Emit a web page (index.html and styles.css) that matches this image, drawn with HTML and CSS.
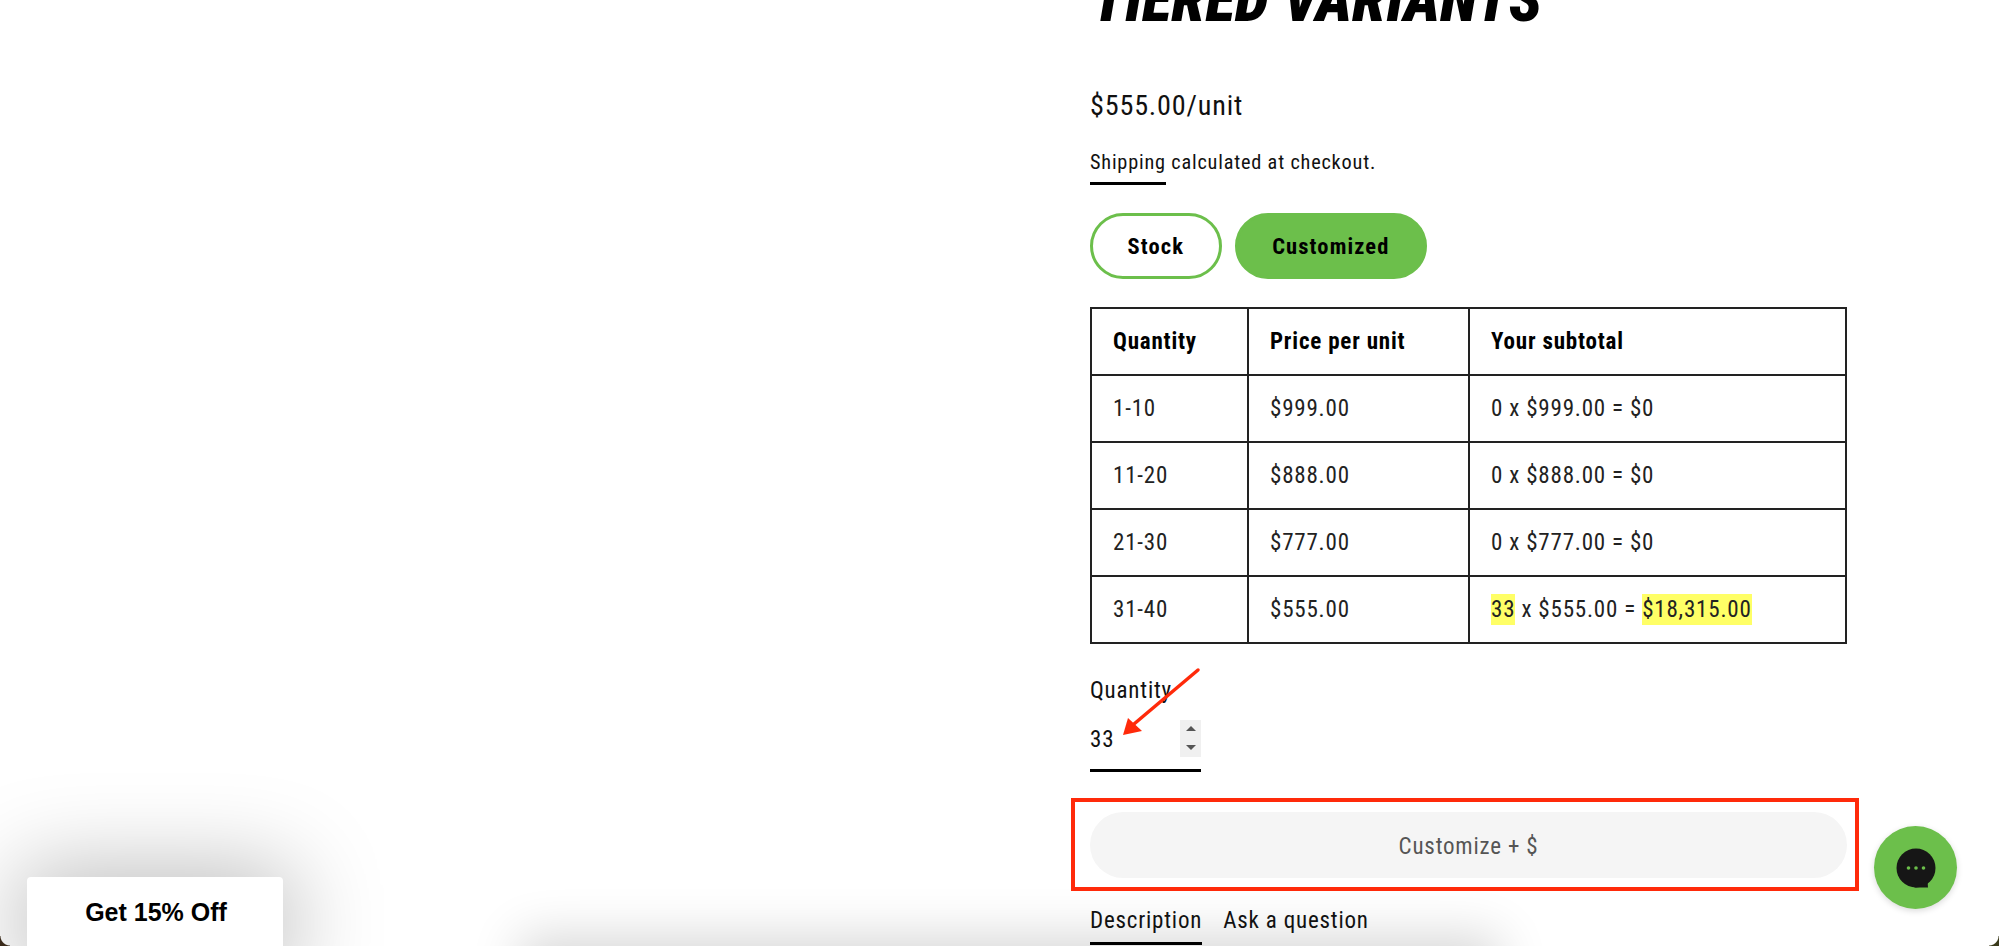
FILE: index.html
```html
<!DOCTYPE html>
<html lang="en">
<head>
<meta charset="utf-8">
<title>Tiered Variants</title>
<link rel="stylesheet" href="styles.css">
</head>
<body>
<div class="page">
  <div class="bottom-shade"></div>
  <main class="product">
    <h1 class="title">TIERED VARIANTS</h1>
    <p class="price">$555.00/unit</p>
    <p class="shipping"><a class="ship-link">Shipping</a> calculated at checkout.</p>
    <div class="options">
      <button class="opt">Stock</button>
      <button class="opt opt-on">Customized</button>
    </div>
    <table class="tiers">
      <colgroup><col class="c1"><col class="c2"><col class="c3"></colgroup>
      <tr><th>Quantity</th><th>Price per unit</th><th>Your subtotal</th></tr>
      <tr><td>1-10</td><td>$999.00</td><td>0 x $999.00 = $0</td></tr>
      <tr><td>11-20</td><td>$888.00</td><td>0 x $888.00 = $0</td></tr>
      <tr><td>21-30</td><td>$777.00</td><td>0 x $777.00 = $0</td></tr>
      <tr><td>31-40</td><td>$555.00</td><td><mark>33</mark> x $555.00 = <mark>$18,315.00</mark></td></tr>
    </table>
    <div class="qty">
      <div class="qty-label">Quantity</div>
      <div class="qty-field">
        <span>33</span>
        <span class="spin"><i class="up"></i><i class="down"></i></span>
      </div>
    </div>
    <div class="cta"><span class="cta-text">Customize + $</span></div>
    <nav class="tabs">
      <span class="tab tab-on">Description</span>
      <span class="tab">Ask a question</span>
    </nav>
  </main>

  <svg class="annot" width="1999" height="946" viewBox="0 0 1999 946">
    <rect x="1073" y="800" width="784" height="89" fill="none" stroke="#ff2a0a" stroke-width="4"/>
    <path d="M1198 670 L1134 724" stroke="#ff2a0a" stroke-width="3.500" fill="none" stroke-linecap="round"/>
    <path d="M1123 735 L1128 718 L1142 731 Z" fill="#ff2a0a"/>
  </svg>

  <div class="promo"><span>Get 15% Off</span></div>

  <div class="chat">
    <svg width="40" height="40" viewBox="0 0 40 40">
      <circle cx="20" cy="20" r="19.500" fill="#161616"/>
      <path d="M18 39.500 L32 39.500 L31.500 33 Z" fill="#161616"/>
      <circle cx="12.500" cy="20" r="1.800" fill="#6cbf4b"/>
      <circle cx="20" cy="20" r="1.800" fill="#6cbf4b"/>
      <circle cx="27.500" cy="20" r="1.800" fill="#6cbf4b"/>
    </svg>
  </div>

  <div class="corner corner-l"></div>
  <div class="corner corner-r"></div>
</div>
</body>
</html>
```
FILE: styles.css
```css
* { box-sizing: border-box; }
html, body { margin: 0; padding: 0; background: #fff; }
.page {
  position: relative;
  width: 1999px;
  height: 946px;
  overflow: hidden;
  background: #fff;
  font-family: "Roboto Condensed", Roboto, "Liberation Sans", sans-serif;
  color: #111;
}
.product {
  position: relative;
  margin-left: 1090px;
  width: 757px;
  letter-spacing: 0.05em;
}
.title, .price, .shipping, .tab, .qty-label, .qty-field, .cta-text, .opt, .tiers th, .tiers td {
  font-stretch: 75%;
}
.title {
  margin: -24px 0 0;
  padding-left: 2px;
  height: 47px;
  line-height: 47px;
  font-size: 62px;
  font-weight: 900;
  font-style: italic;
  letter-spacing: 0;
  color: #000;
  white-space: nowrap;
}
.price { margin: 0; padding-top: 65px; font-size: 28.200px; line-height: 36px; }
.shipping { margin: 0; padding-top: 24px; font-size: 20.300px; line-height: 28px; }
.ship-link { display: inline-block; height: 37px; border-bottom: 3px solid #000; }
.options { display: flex; gap: 13px; margin-top: 28px; }
.opt {
  height: 66px;
  padding: 0 34.500px;
  border-radius: 33px;
  border: 3px solid #6cbf4b;
  background: #fff;
  color: #000;
  font-family: inherit;
  font-size: 22.500px;
  font-weight: 700;
  letter-spacing: 0.05em;
}
.opt-on { background: #6cbf4b; }
.tiers {
  margin-top: 28px;
  width: 757px;
  height: 335px;
  border-collapse: collapse;
  table-layout: fixed;
  font-size: 23px;
  color: #222;
}
.c1 { width: 157px; }
.c2 { width: 221px; }
.tiers th, .tiers td {
  border: 2px solid #222;
  padding: 0 21px;
  text-align: left;
  height: 67px;
}
.tiers th { font-weight: 700; color: #000; }
mark { background: #ffff66; color: inherit; padding: 2px 0; }
.qty { margin-top: 31px; width: 111px; }
.qty-label { font-size: 23px; line-height: 32px; }
.qty-field {
  display: flex;
  justify-content: space-between;
  align-items: center;
  height: 55px;
  margin-top: 10px;
  padding-bottom: 8px;
  border-bottom: 3px solid #000;
  font-size: 23px;
}
.spin {
  display: flex;
  flex-direction: column;
  justify-content: space-around;
  align-items: center;
  width: 21px;
  height: 37px;
  margin-top: -2px;
  background: #f0f0f0;
}
.up, .down { width: 0; height: 0; border-left: 5px solid transparent; border-right: 5px solid transparent; }
.up { border-bottom: 5px solid #555; }
.down { border-top: 5px solid #555; }
.cta {
  display: flex;
  align-items: center;
  justify-content: center;
  height: 66px;
  margin-top: 40px;
  padding-top: 2px;
  border-radius: 33px;
  background: #f5f5f5;
  color: #555;
  font-size: 23px;
}
.tabs { display: flex; gap: 21px; margin-top: 27px; font-size: 23px; }
.tab { height: 40px; line-height: 32px; }
.tab-on { border-bottom: 3px solid #000; }
.bottom-shade {
  position: absolute;
  left: 530px;
  right: 510px;
  bottom: -60px;
  height: 60px;
  box-shadow: 0 0 50px 10px rgba(0,0,0,0.16);
}
.annot { position: absolute; left: 0; top: 0; pointer-events: none; }
.promo {
  position: absolute;
  left: 27px;
  top: 877px;
  width: 256px;
  height: 90px;
  padding: 21px 0 0 2px;
  background: #fff;
  border-radius: 4px;
  box-shadow: 0 0 90px 10px rgba(0,0,0,0.26);
  text-align: center;
  font-family: "Liberation Sans", Arial, sans-serif;
  font-size: 25px;
  font-weight: 700;
  color: #000;
}
.chat {
  position: absolute;
  left: 1874px;
  top: 826px;
  width: 83px;
  height: 83px;
  border-radius: 50%;
  background: #6cbf4b;
  box-shadow: 0 2px 6px rgba(0,0,0,0.15);
  display: flex;
  align-items: center;
  justify-content: center;
}
.corner { position: absolute; bottom: 0; width: 10px; height: 10px; }
.corner-l { left: 0; background: radial-gradient(circle at 100% 0, transparent 9px, #3a2a1a 10px); }
.corner-r { right: 0; background: radial-gradient(circle at 0 0, transparent 9px, #3a3a1a 10px); }
```
